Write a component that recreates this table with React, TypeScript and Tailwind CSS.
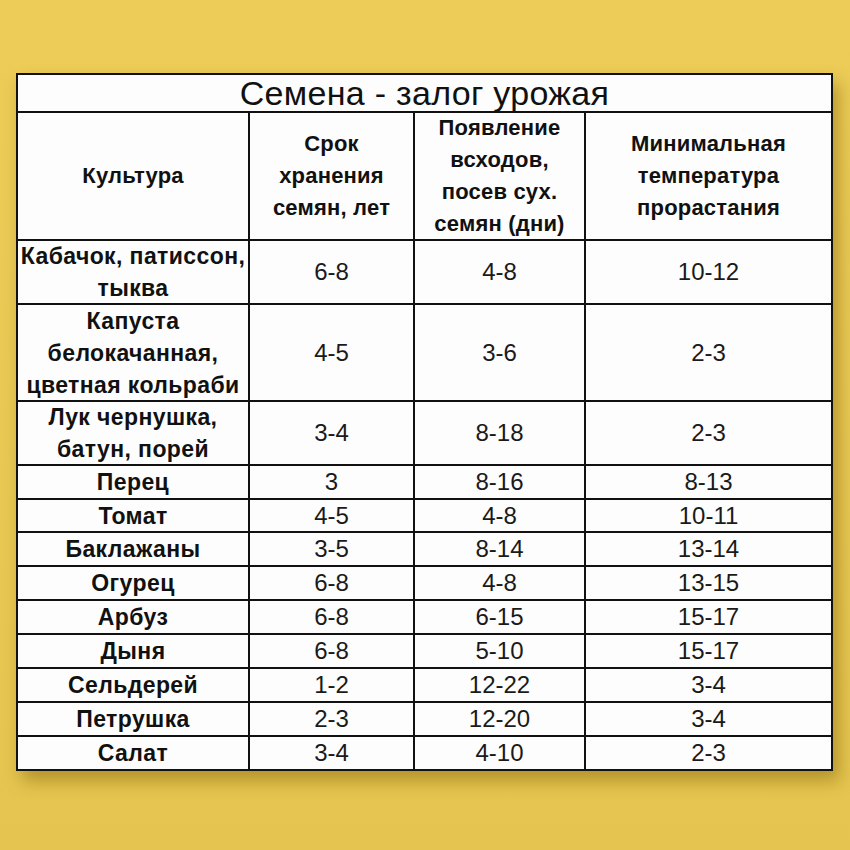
const rows: { name: string[]; storage: string; sprout: string; temp: string }[] = [
  { name: ['Кабачок, патиссон,', 'тыква'], storage: '6-8', sprout: '4-8', temp: '10-12' },
  { name: ['Капуста', 'белокачанная,', 'цветная кольраби'], storage: '4-5', sprout: '3-6', temp: '2-3' },
  { name: ['Лук чернушка,', 'батун, порей'], storage: '3-4', sprout: '8-18', temp: '2-3' },
  { name: ['Перец'], storage: '3', sprout: '8-16', temp: '8-13' },
  { name: ['Томат'], storage: '4-5', sprout: '4-8', temp: '10-11' },
  { name: ['Баклажаны'], storage: '3-5', sprout: '8-14', temp: '13-14' },
  { name: ['Огурец'], storage: '6-8', sprout: '4-8', temp: '13-15' },
  { name: ['Арбуз'], storage: '6-8', sprout: '6-15', temp: '15-17' },
  { name: ['Дыня'], storage: '6-8', sprout: '5-10', temp: '15-17' },
  { name: ['Сельдерей'], storage: '1-2', sprout: '12-22', temp: '3-4' },
  { name: ['Петрушка'], storage: '2-3', sprout: '12-20', temp: '3-4' },
  { name: ['Салат'], storage: '3-4', sprout: '4-10', temp: '2-3' },
];

const cell = 'bg-[#fdfdfd] flex flex-col items-center justify-center text-center';
const head = cell + ' text-[22px] font-bold leading-[32px] tracking-[0.2px]';
const num = cell + ' text-[24px] leading-none text-[#1a1a1a]';

export default function App() {
  return (
    <div
      className="w-[850px] h-[850px] bg-gradient-to-b from-[#edcd58] to-[#e5c54f] pt-[73px] pl-[16px] text-[#111]"
      style={{ fontFamily: '"Liberation Sans", Arial, sans-serif' }}
    >
      <div className="w-[817px] grid grid-cols-[230px_163px_169px_245px] grid-rows-[36px_126px_62px_95px_62px_32px_31px_32px_32px_32px_32px_32px_32px_32px] gap-[2px] p-[2px] bg-[#111] shadow-[6px_10px_16px_rgba(120,88,0,0.45)]">
        {/* Title */}
        <div className={cell + ' col-span-4 text-[34px] leading-none tracking-[0.3px]'}>Семена - залог урожая</div>

        {/* Header */}
        <div className={head}>Культура</div>
        <div className={head}>
          <span>Срок</span>
          <span>хранения</span>
          <span>семян, лет</span>
        </div>
        <div className={head}>
          <span>Появление</span>
          <span>всходов,</span>
          <span>посев сух.</span>
          <span>семян (дни)</span>
        </div>
        <div className={head}>
          <span>Минимальная</span>
          <span>температура</span>
          <span>прорастания</span>
        </div>

        {/* Rows */}
        {rows.map((r) => (
          <div key={r.name.join(' ')} className="contents">
            <div className={cell + ' text-[23px] font-bold leading-[32px] tracking-[0.4px]'}>
              {r.name.map((line) => (
                <span key={line}>{line}</span>
              ))}
            </div>
            <div className={num}>{r.storage}</div>
            <div className={num}>{r.sprout}</div>
            <div className={num}>{r.temp}</div>
          </div>
        ))}
      </div>
    </div>
  );
}
